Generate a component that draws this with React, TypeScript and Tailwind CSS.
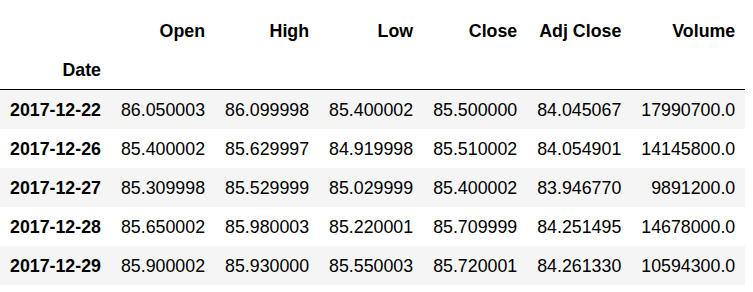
const columns = ['Open', 'High', 'Low', 'Close', 'Adj Close', 'Volume'];

const rows: [string, string[]][] = [
  ['2017-12-22', ['86.050003', '86.099998', '85.400002', '85.500000', '84.045067', '17990700.0']],
  ['2017-12-26', ['85.400002', '85.629997', '84.919998', '85.510002', '84.054901', '14145800.0']],
  ['2017-12-27', ['85.309998', '85.529999', '85.029999', '85.400002', '83.946770', '9891200.0']],
  ['2017-12-28', ['85.650002', '85.980003', '85.220001', '85.709999', '84.251495', '14678000.0']],
  ['2017-12-29', ['85.900002', '85.930000', '85.550003', '85.720001', '84.261330', '10594300.0']],
];

export default function App() {
  return (
    <div className="w-[753px] h-[292px] bg-white overflow-hidden font-['Liberation_Sans',Arial,sans-serif] text-[17.8px] text-black">
      <table className="mt-[11px] border-separate border-spacing-0 leading-[20px]">
        <thead>
          <tr className="h-[39px]">
            <th className="px-[10px]" />
            {columns.map((c) => (
              <th key={c} className="px-[10px] text-right font-bold">
                {c}
              </th>
            ))}
          </tr>
          <tr className="h-[40px]">
            <th className="px-[10px] text-right font-bold border-b border-black">Date</th>
            {columns.map((c) => (
              <th key={c} className="px-[10px] border-b border-black" />
            ))}
          </tr>
        </thead>
        <tbody>
          {rows.map(([date, vals], i) => (
            <tr key={date} className={i % 2 === 0 ? 'h-[39px] bg-[#f5f5f5]' : 'h-[39px] bg-white'}>
              <th className="px-[10px] text-right font-bold">{date}</th>
              {vals.map((v, j) => (
                <td key={j} className="px-[10px] text-right">
                  {v}
                </td>
              ))}
            </tr>
          ))}
        </tbody>
      </table>
    </div>
  );
}
